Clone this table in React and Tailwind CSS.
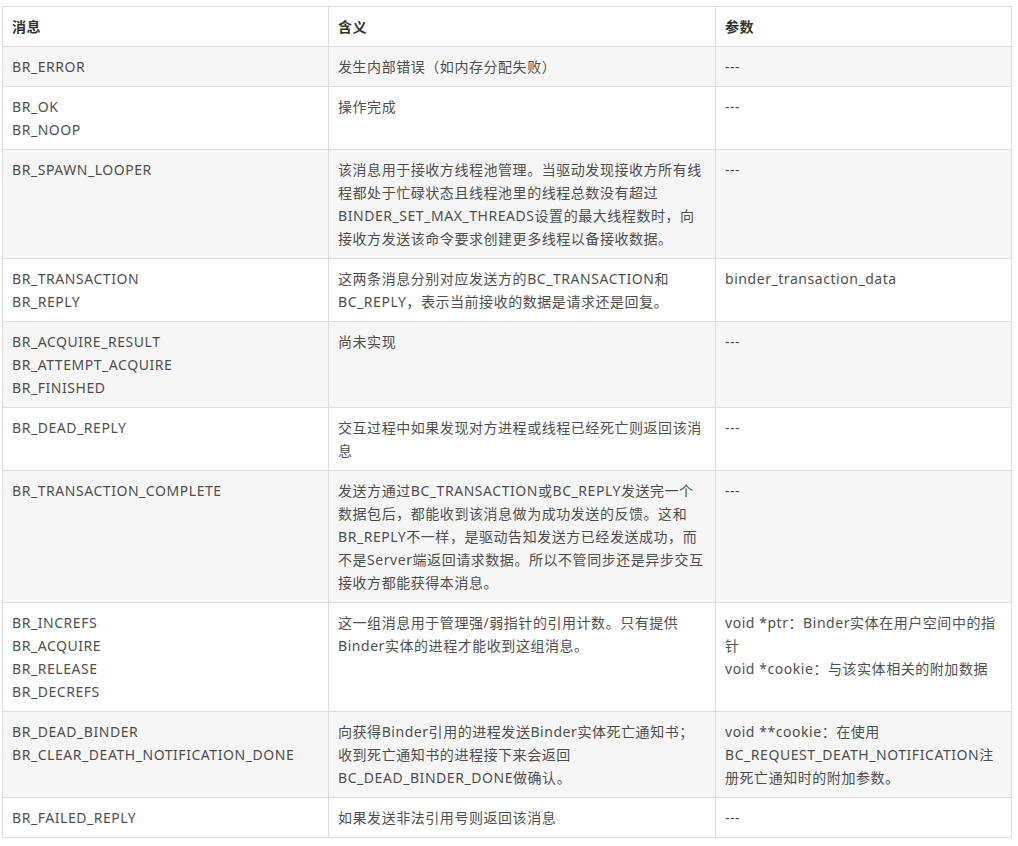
import React from "react";

const rows = [
  [["BR_ERROR"], ["发生内部错误（如内存分配失败）"], ["---"]],
  [["BR_OK", "BR_NOOP"], ["操作完成"], ["---"]],
  [
    ["BR_SPAWN_LOOPER"],
    [
      "该消息用于接收方线程池管理。当驱动发现接收方所有线",
      "程都处于忙碌状态且线程池里的线程总数没有超过",
      "BINDER_SET_MAX_THREADS设置的最大线程数时，向",
      "接收方发送该命令要求创建更多线程以备接收数据。",
    ],
    ["---"],
  ],
  [
    ["BR_TRANSACTION", "BR_REPLY"],
    ["这两条消息分别对应发送方的BC_TRANSACTION和", "BC_REPLY，表示当前接收的数据是请求还是回复。"],
    ["binder_transaction_data"],
  ],
  [["BR_ACQUIRE_RESULT", "BR_ATTEMPT_ACQUIRE", "BR_FINISHED"], ["尚未实现"], ["---"]],
  [["BR_DEAD_REPLY"], ["交互过程中如果发现对方进程或线程已经死亡则返回该消", "息"], ["---"]],
  [
    ["BR_TRANSACTION_COMPLETE"],
    [
      "发送方通过BC_TRANSACTION或BC_REPLY发送完一个",
      "数据包后，都能收到该消息做为成功发送的反馈。这和",
      "BR_REPLY不一样，是驱动告知发送方已经发送成功，而",
      "不是Server端返回请求数据。所以不管同步还是异步交互",
      "接收方都能获得本消息。",
    ],
    ["---"],
  ],
  [
    ["BR_INCREFS", "BR_ACQUIRE", "BR_RELEASE", "BR_DECREFS"],
    ["这一组消息用于管理强/弱指针的引用计数。只有提供", "Binder实体的进程才能收到这组消息。"],
    ["void *ptr：Binder实体在用户空间中的指", "针", "void *cookie：与该实体相关的附加数据"],
  ],
  [
    ["BR_DEAD_BINDER", "BR_CLEAR_DEATH_NOTIFICATION_DONE"],
    ["向获得Binder引用的进程发送Binder实体死亡通知书；", "收到死亡通知书的进程接下来会返回", "BC_DEAD_BINDER_DONE做确认。"],
    ["void **cookie：在使用", "BC_REQUEST_DEATH_NOTIFICATION注", "册死亡通知时的附加参数。"],
  ],
  [["BR_FAILED_REPLY"], ["如果发送非法引用号则返回该消息"], ["---"]],
];

function Cell({ lines }) {
  return (
    <td className="border border-[#dddddd] px-[9px] py-2 align-top">
      {lines.map((l, i) => (
        <div key={i} className="whitespace-nowrap">
          {l}
        </div>
      ))}
    </td>
  );
}

export default function App() {
  return (
    <div
      className="bg-white w-[1018px] h-[846px] pt-[6px] pl-[2px]"
      style={{ fontFamily: '"Noto Sans", "Noto Sans CJK SC", sans-serif' }}
    >
      <table className="table-fixed border-collapse w-[1009px] text-[14px] leading-[23px] tracking-[0.55px] text-[#4f4f4f]">
        <colgroup>
          <col className="w-[326px]" />
          <col className="w-[387px]" />
          <col className="w-[296px]" />
        </colgroup>
        <thead>
          <tr>
            <th className="border border-[#dddddd] px-[9px] py-2 text-left font-bold text-[#333333]">消息</th>
            <th className="border border-[#dddddd] px-[9px] py-2 text-left font-bold text-[#333333]">含义</th>
            <th className="border border-[#dddddd] px-[9px] py-2 text-left font-bold text-[#333333]">参数</th>
          </tr>
        </thead>
        <tbody>
          {rows.map((r, i) => (
            <tr key={i} className={i % 2 === 0 ? "bg-[#f6f6f6]" : "bg-white"}>
              <Cell lines={r[0]} />
              <Cell lines={r[1]} />
              <Cell lines={r[2]} />
            </tr>
          ))}
        </tbody>
      </table>
    </div>
  );
}
